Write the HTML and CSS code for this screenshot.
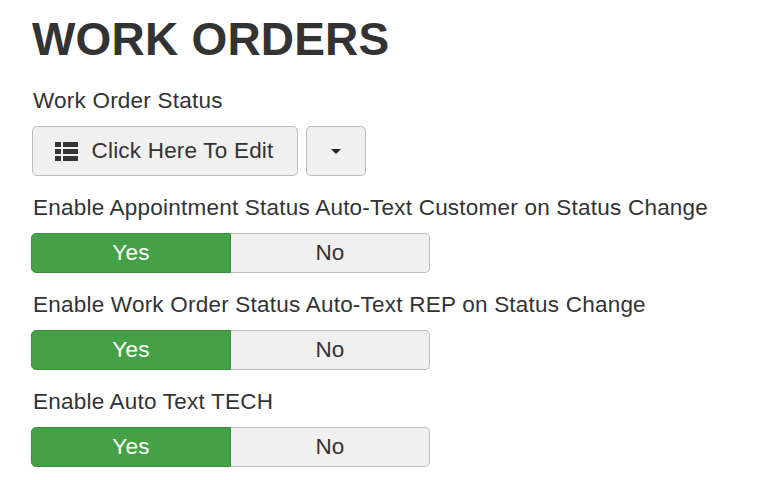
FILE: index.html
```html
<!DOCTYPE html>
<html>
<head>
<meta charset="utf-8">
<link rel="stylesheet" href="styles.css">
</head>
<body>
<div class="page">
  <h1 class="title">WORK ORDERS</h1>
  <div class="field first">
    <div class="label">Work Order Status</div>
    <div class="btn-row">
      <button class="btn btn-main">
        <svg class="icon" width="23" height="19" viewBox="0 0 23 19">
          <rect x="0" y="0" width="6" height="5" fill="#333"/>
          <rect x="8" y="0" width="15" height="5" fill="#333"/>
          <rect x="0" y="7" width="6" height="5" fill="#333"/>
          <rect x="8" y="7" width="15" height="5" fill="#333"/>
          <rect x="0" y="14" width="6" height="5" fill="#333"/>
          <rect x="8" y="14" width="15" height="5" fill="#333"/>
        </svg>
        <span>Click Here To Edit</span>
      </button>
      <button class="btn btn-caret"><span class="caret"></span></button>
    </div>
  </div>
  <div class="field">
    <div class="label">Enable Appointment Status Auto-Text Customer on Status Change</div>
    <div class="toggle">
      <div class="opt yes">Yes</div>
      <div class="opt no">No</div>
    </div>
  </div>
  <div class="field">
    <div class="label">Enable Work Order Status Auto-Text REP on Status Change</div>
    <div class="toggle">
      <div class="opt yes">Yes</div>
      <div class="opt no">No</div>
    </div>
  </div>
  <div class="field">
    <div class="label">Enable Auto Text TECH</div>
    <div class="toggle">
      <div class="opt yes">Yes</div>
      <div class="opt no">No</div>
    </div>
  </div>
</div>
</body>
</html>
```
FILE: styles.css
```css
html, body {
  margin: 0;
  padding: 0;
  background: #ffffff;
}
.page {
  padding: 16px 0 0 32px;
  font-family: "Liberation Sans", Arial, sans-serif;
  color: #333333;
}
.title {
  margin: 0 0 21px 0;
  font-size: 46px;
  line-height: 46px;
  font-weight: bold;
  color: #333333;
  letter-spacing: 0.2px;
}
.field {
  margin-top: 14px;
}
.field.first {
  margin-top: 0;
}
.label {
  font-size: 22.5px;
  line-height: 30px;
  letter-spacing: 0.22px;
  padding-top: 3px;
  margin-bottom: 10px;
  padding-left: 1px;
}
.btn-row {
  display: flex;
  gap: 8px;
}
.btn {
  display: flex;
  align-items: center;
  justify-content: center;
  height: 50px;
  box-sizing: border-box;
  background: #f0f0f0;
  border: 1px solid #bdbdbd;
  border-radius: 5px;
  font-family: "Liberation Sans", Arial, sans-serif;
  font-size: 22.5px;
  letter-spacing: 0.2px;
  color: #333333;
  padding: 0;
}
.btn-main {
  width: 266px;
  gap: 14px;
  padding-right: 2px;
}
.icon {
  display: block;
}
.btn-caret {
  width: 60px;
}
.caret {
  width: 0;
  height: 0;
  border-left: 5px solid transparent;
  border-right: 5px solid transparent;
  border-top: 5px solid #222;
}
.toggle {
  display: flex;
  width: 399px;
  height: 40px;
  margin-left: -1px;
}
.opt {
  flex: 1;
  display: flex;
  align-items: center;
  justify-content: center;
  box-sizing: border-box;
  font-size: 22.5px;
  letter-spacing: 0.2px;
}
.yes {
  background: #44a148;
  border: 1px solid #3b8e3f;
  border-radius: 5px 0 0 5px;
  color: #ffffff;
}
.no {
  background: #f0f0f0;
  border: 1px solid #bdbdbd;
  border-left: none;
  border-radius: 0 5px 5px 0;
  color: #333333;
}
```
